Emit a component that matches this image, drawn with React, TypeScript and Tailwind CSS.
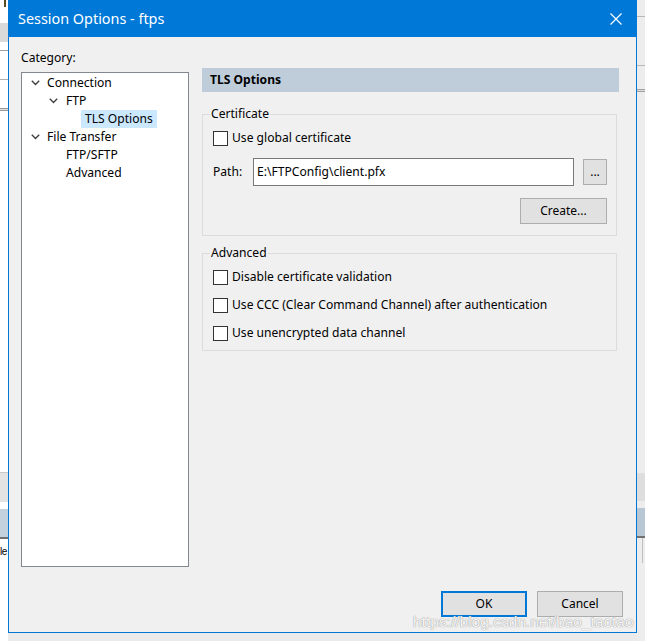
const Chevron = () => (
  <svg width="9" height="6" viewBox="0 0 9 6" className="shrink-0">
    <path d="M0.8 0.8L4.5 4.5L8.2 0.8" fill="none" stroke="#404040" strokeWidth="1.4" />
  </svg>
);

const CheckBox = ({ label }: { label: string }) => (
  <div className="flex items-center gap-[4px]">
    <div className="h-[15px] w-[15px] shrink-0 border border-[#333333] bg-white" />
    <span>{label}</span>
  </div>
);

const WinButton = ({ label, className }: { label: string; className: string }) => (
  <button
    type="button"
    className={`flex items-center justify-center bg-[#e1e1e1] text-[12px] text-black ${className}`}
  >
    {label}
  </button>
);

const LeftStrip = () => (
  <div className="flex w-[8px] shrink-0 flex-col bg-white">
    <div className="ml-[4px] h-[7px] w-[2px] bg-[#5a4a20]" />
    <div className="mt-[16px] h-[19px] bg-[#dadada]" />
    <div className="mt-[8px] h-px bg-[#a0a0a0]" />
    <div className="mt-[28px] h-px bg-[#b0b0b0]" />
    <div className="mt-[28px] h-[3px] border-y border-[#999999] bg-[#e0e0e0]" />
    <div className="mt-[361px] h-[30px] border-t border-[#c8c8c8] bg-[#e3e3e3]" />
    <div className="mt-[7px] h-[28px] bg-[#c3d0dd]" />
    <div className="h-[2px] bg-[#707070]" />
    <div className="mt-[6px] h-[14px] font-['Liberation_Sans',sans-serif] text-[10px] leading-[14px] tracking-[-0.5px] text-black">
      le
    </div>
  </div>
);

const RightStrip = () => (
  <div className="flex flex-1 flex-col bg-[#ededed]">
    <div className="mt-[16px] h-px bg-[#b8b8b8]" />
    <div className="mt-[48px] h-px bg-[#b8b8b8]" />
    <div className="mt-[23px] h-[3px] border-y border-[#a0a0a0] bg-[#dcdcdc]" />
    <div className="mt-[381px] h-[28px] bg-[#dedede]" />
    <div className="mt-[7px] h-[28px] bg-[#b9c6d3]" />
    <div className="h-[2px] bg-[#707070]" />
    <div className="ml-[5px] h-[25px] w-px bg-[#c0c0c0]" />
  </div>
);

export default function App() {
  return (
    <div className="relative flex h-[641px] w-[645px] overflow-hidden bg-white font-['Noto_Sans',sans-serif] text-[12.1px] leading-[16px] text-black">
      <LeftStrip />

      <div className="flex w-[629px] shrink-0 flex-col">
        <div className="flex h-[633px] flex-col border-x border-b border-[#0078d7] bg-[#f0f0f0]">
          {/* title bar */}
          <div className="-mx-px flex h-[37px] items-center justify-between bg-[#0078d7] pl-[10px] pr-[15px] text-white">
            <span className="text-[14.4px] leading-[20px]">Session Options - ftps</span>
            <svg width="12" height="12" viewBox="0 0 12 12">
              <path d="M0.5 0.5L11.5 11.5M11.5 0.5L0.5 11.5" stroke="white" strokeWidth="1.2" />
            </svg>
          </div>

          <div className="flex flex-1 flex-col">
            <div className="flex pl-[12px] pt-[13px]">
              {/* category tree */}
              <div className="flex w-[168px] flex-col">
                <div className="h-[16px]">Category:</div>
                <div className="mt-[6px] h-[495px] border border-[#828790] bg-white pt-[1px]">
                  <div className="flex h-[18px] items-center pl-[9px]">
                    <span className="w-[16px]">
                      <Chevron />
                    </span>
                    <span>Connection</span>
                  </div>
                  <div className="flex h-[18px] items-center pl-[27px]">
                    <span className="w-[17px]">
                      <Chevron />
                    </span>
                    <span>FTP</span>
                  </div>
                  <div className="flex h-[18px] items-stretch pl-[59px]">
                    <span className="flex items-center bg-[#cce8ff] px-[4px]">TLS Options</span>
                  </div>
                  <div className="flex h-[18px] items-center pl-[9px]">
                    <span className="w-[16px]">
                      <Chevron />
                    </span>
                    <span>File Transfer</span>
                  </div>
                  <div className="flex h-[18px] items-center pl-[44px]">FTP/SFTP</div>
                  <div className="flex h-[18px] items-center pl-[44px]">Advanced</div>
                </div>
              </div>

              {/* options page */}
              <div className="ml-[13px] mt-[18px] flex w-[417px] flex-col">
                <div className="flex h-[24px] items-center bg-[#bfcddb] pl-[8px] font-bold">TLS Options</div>

                <fieldset className="mt-[14px] w-[415px] border border-[#dcdcdc] pb-[11px] pl-[10px] pr-[9px]">
                  <legend className="-ml-[3px] px-[1px]">Certificate</legend>
                  <div className="mt-[8px]">
                    <CheckBox label="Use global certificate" />
                  </div>
                  <div className="mt-[12px] flex items-center">
                    <span className="w-[40px]">Path:</span>
                    <div className="flex h-[28px] w-[321px] items-center border border-[#7a7a7a] bg-white pl-[3px]">
                      E:\FTPConfig\client.pfx
                    </div>
                    <WinButton label="..." className="ml-[9px] h-[26px] w-[24px] border border-[#adadad]" />
                  </div>
                  <div className="mt-[12px] flex justify-end">
                    <WinButton label="Create..." className="h-[26px] w-[87px] border border-[#adadad]" />
                  </div>
                </fieldset>

                <fieldset className="mt-[9px] w-[415px] border border-[#dcdcdc] pb-[3px] pl-[10px] pr-[9px]">
                  <legend className="-ml-[3px] px-[1px]">Advanced</legend>
                  <div className="mt-[2px] flex h-[28px] items-center">
                    <CheckBox label="Disable certificate validation" />
                  </div>
                  <div className="flex h-[28px] items-center">
                    <CheckBox label="Use CCC (Clear Command Channel) after authentication" />
                  </div>
                  <div className="flex h-[28px] items-center">
                    <CheckBox label="Use unencrypted data channel" />
                  </div>
                </fieldset>
              </div>
            </div>

            {/* dialog buttons */}
            <div className="mt-auto flex justify-end gap-[10px] pb-[15px] pr-[13px]">
              <WinButton label="OK" className="h-[26px] w-[86px] border-2 border-[#0078d7]" />
              <WinButton label="Cancel" className="h-[26px] w-[86px] border border-[#adadad]" />
            </div>
          </div>
        </div>
        <div className="flex-1 bg-[#ebebeb]" />
      </div>

      <RightStrip />

      <div className="absolute left-[413px] top-[612px] font-['Liberation_Sans',sans-serif] text-[15.5px] leading-[20px] text-white/90 [text-shadow:0_0_1px_#9a9a9a,0_0_1px_#9a9a9a]">
        https://blog.csdn.net/bao_taotao
      </div>
    </div>
  );
}
